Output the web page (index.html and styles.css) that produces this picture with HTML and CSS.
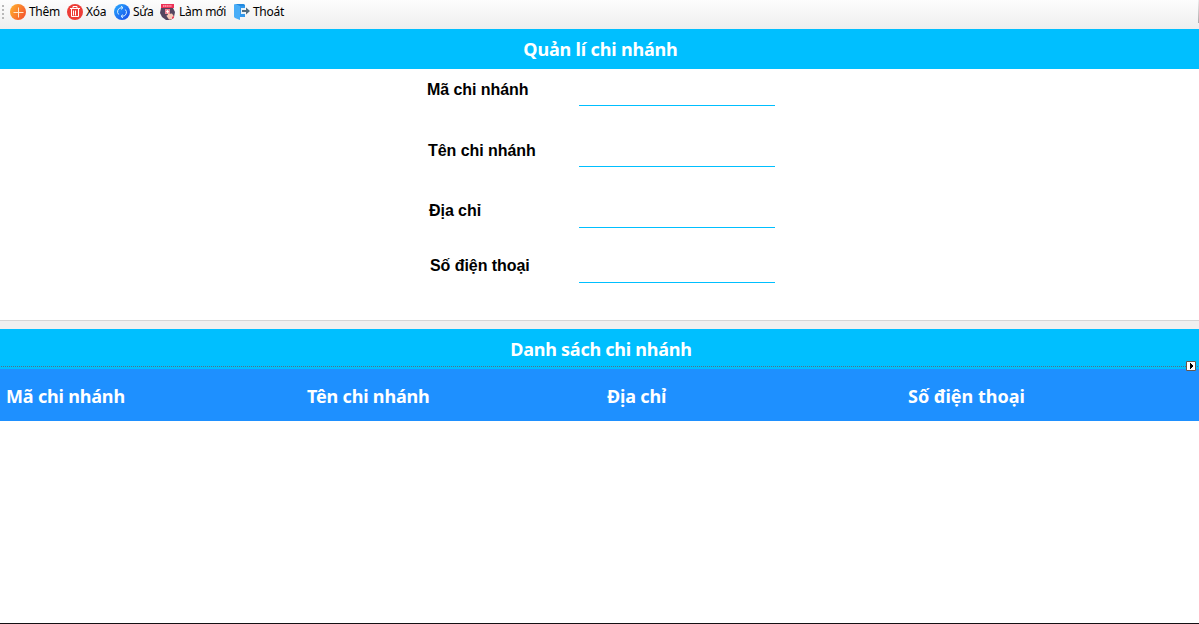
FILE: index.html
```html
<!DOCTYPE html>
<html lang="vi">
<head>
<meta charset="utf-8">
<title>Quản lí chi nhánh</title>
<link rel="stylesheet" href="styles.css">
</head>
<body>
<nav class="toolbar">
  <span class="grip"></span>
  <button class="tool add"><svg viewBox="0 0 16 16"><defs><linearGradient id="warm" x1="0" y1="0.2" x2="1" y2="0.8"><stop offset="0" stop-color="#ffad2f"/><stop offset="1" stop-color="#f4512c"/></linearGradient></defs><circle cx="8" cy="8" r="8" fill="url(#warm)"/><path d="M8.5 3.5v10M3.5 8.5h10" stroke="#ffe8cf" stroke-width="1"/></svg><span>Thêm</span></button>
  <button class="tool delete"><svg viewBox="0 0 16 16"><circle cx="8" cy="8" r="8" fill="#ed3d37"/><path d="M3 4.5h10M6 4V2.5h4V4M4.5 5v7.5h7V5M6.5 6.5v5M8.5 6.5v5" fill="none" stroke="#fff" stroke-width="1"/></svg><span>Xóa</span></button>
  <button class="tool edit"><svg viewBox="0 0 16 16"><defs><linearGradient id="cool" x1="0" y1="0" x2="1" y2="1"><stop offset="0" stop-color="#2aacff"/><stop offset="1" stop-color="#1647e8"/></linearGradient></defs><circle cx="8" cy="8" r="8" fill="url(#cool)"/><path d="M8.8 3.7H7.5a4 4 0 0 0-2.8 6.8M7.2 12.3h1.3a4 4 0 0 0 2.8-6.8M7 2l2 1.7L7 5.4M9 10.6l-2 1.7L9 14" fill="none" stroke="#d9f1ff" stroke-width="1"/></svg><span>Sửa</span></button>
  <button class="tool refresh"><svg viewBox="0 0 16 16"><path d="M1 4h12l2 4-1 5-3 3H6l-4-3-2-4z" fill="#54445f"/><path d="M1 0h13v4H1z" fill="#ed3157"/><path d="M3 2h9" stroke="#ffadb9" stroke-width="1.4" stroke-dasharray="1.3 .5"/><path d="M5 5h5v5H5z" fill="#ee8495"/><path d="M7 6.5l1.5.5v3l3.5-.5 2 3-2.5 3H9L6.5 12l.5-1 1 .3z" fill="#f9c9b7"/><path d="M6 7.5h3M7.5 6v3" stroke="#fff" stroke-width=".8"/><path d="M12 13l2-1v2l-2 1z" fill="#ef4562"/></svg><span>Làm mới</span></button>
  <button class="tool exit"><svg viewBox="0 0 16 16"><path d="M1 0h8.5q1.5 0 1.5 1.5V13H6V3L1 0z" fill="#2089df"/><path d="M1.2 0 6 2v14l-5-2q-1-.4-1-1.4V1Q0 0 1.2 0z" fill="#48adf7"/><path d="M6 2h4q1 0 1 1v9q0 1-1 1H6z" fill="#3197eb"/><path d="M7 4h4v6H7z" fill="#e7f1f7"/><path d="M8 6h4V3.5l4 3.5-4 3.5V8H8z" fill="#526b7d"/></svg><span>Thoát</span></button>
  <span class="toolbar-edge"></span>
</nav>
<main>
  <h1 class="title">Quản lí chi nhánh</h1>
  <form class="form">
    <label class="field code"><span>Mã chi nhánh</span><input type="text"></label>
    <label class="field name"><span>Tên chi nhánh</span><input type="text"></label>
    <label class="field address"><span>Địa chỉ</span><input type="text"></label>
    <label class="field phone"><span>Số điện thoại</span><input type="text"></label>
  </form>
  <section class="list">
    <h2 class="title list-title"><span>Danh sách chi nhánh</span>
      <i class="dots"></i>
      <svg class="marker" viewBox="0 0 10 10"><path d="M.5.5h9v9h-9z" fill="#fff" stroke="#66584e"/><path d="M4 2h1v1h1v1h1v2H6v1H5v1H4z" fill="#000"/></svg>
    </h2>
    <div class="columns">
      <span class="c1">Mã chi nhánh</span><span class="c2">Tên chi nhánh</span><span class="c3">Địa chỉ</span><span class="c4">Số điện thoại</span>
    </div>
    <div class="rows"></div>
  </section>
</main>
</body>
</html>
```
FILE: styles.css
```css
* { box-sizing: border-box; }
body { margin: 0; width: 1199px; height: 624px; overflow: hidden; background: #fff; font-family: "Noto Sans", sans-serif; }
.toolbar { height: 29px; display: flex; align-items: flex-start; padding: 4px 0 0 2px; background: linear-gradient(#fdfdfd, #eee); position: relative; }
.grip { width: 2px; height: 14px; margin-top: 1px; margin-right: 6px; background: repeating-linear-gradient(#b8b8b8 0 2px, transparent 2px 4px); }
.tool { border: 0; padding: 0; background: none; display: flex; gap: 3px; height: 16px; font: 12px/16px "Noto Sans", sans-serif; color: #000; white-space: nowrap; flex: none; letter-spacing: -0.3px; }
.tool svg { width: 16px; height: 16px; flex: none; }
.add { width: 57px; }
.delete { width: 47px; }
.edit { width: 46px; }
.refresh { width: 74px; }
.exit { width: 54px; }
.toolbar-edge { position: absolute; right: 0; top: 0; width: 1px; height: 23px; background: linear-gradient(#eee, #aaa); }
.title { margin: 0; height: 40px; display: flex; justify-content: center; padding-left: 2px; background: #00bfff; color: #fff; font-size: 18px; line-height: 40px; font-weight: 700; letter-spacing: -0.17px; }
.form { height: 252px; padding: 10px 0 0 427px; border-bottom: 1px solid #d5d5d5; }
.field { display: flex; align-items: flex-start; height: 61px; font: 700 16px/20px "Liberation Sans", Arial, sans-serif; letter-spacing: -0.06px; }
.field span { width: 152px; padding-top: 1px; }
.name span { padding-left: 1px; }
.address span { padding-left: 2px; }
.phone span { padding-left: 3px; }
.address { height: 55px; }
.field input { width: 196px; height: 27px; padding: 0; border: 0; border-bottom: 1px solid #00bfff; background: transparent; outline: 0; }
.address span { margin-top: -1px; }
.phone span { margin-top: -1px; }
.list { border-top: 8px solid #f0f0f0; }
.list-title { position: relative; padding-left: 3px; letter-spacing: -0.25px; }
.dots { position: absolute; left: 1px; right: 0; top: 37px; height: 1px; background: repeating-linear-gradient(90deg, #536f85 0 1px, transparent 1px 2px); }
.marker { position: absolute; right: 3px; top: 32px; width: 10px; height: 10px; }
.columns { height: 52px; display: grid; grid-template-columns: 301px 300px 301px 1fr; padding: 7px 0 0 6px; background: #1e90ff; color: #fff; font-size: 18px; font-weight: 700; line-height: 40px; letter-spacing: -0.18px; }
.c4 { letter-spacing: 0; }
.rows { height: 203px; border-bottom: 1px solid #141014; }
```
